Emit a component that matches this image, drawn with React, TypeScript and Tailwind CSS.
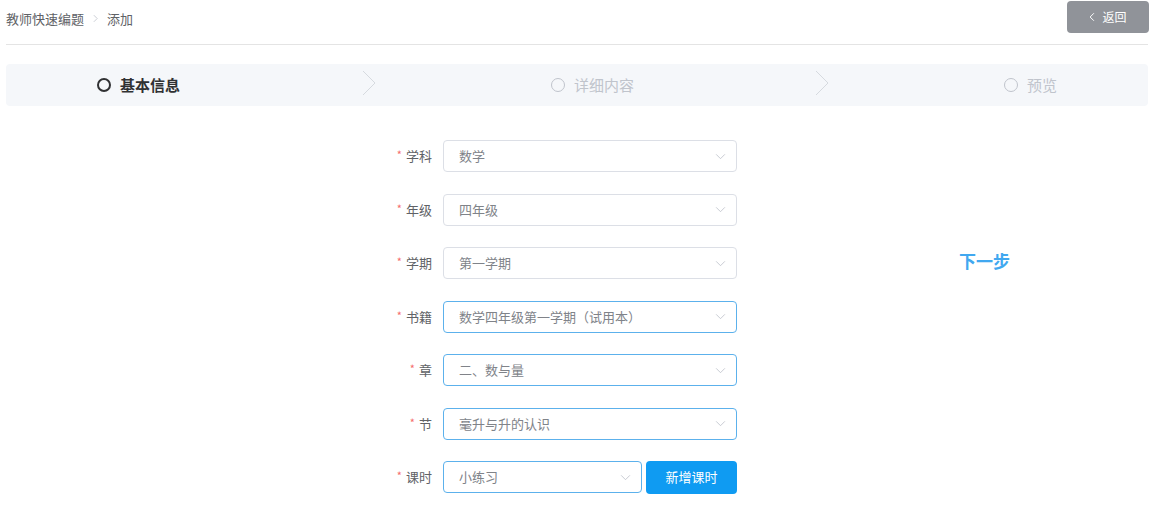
import React from 'react';

const font = { fontFamily: '"Noto Sans CJK SC", "Liberation Sans", sans-serif' };

function Chevron({ className }: { className?: string }) {
  return (
    <svg viewBox="0 0 12 8" className={className} fill="none" stroke="currentColor" strokeWidth="1">
      <path d="M1 1.5 L6 6.5 L11 1.5" />
    </svg>
  );
}

function StepArrow() {
  return (
    <svg viewBox="0 0 14 26" className="w-[14px] h-[26px] text-[#d3d6db] -mt-[4px]" fill="none" stroke="currentColor" strokeWidth="0.9">
      <path d="M1 1 L13 13 L1 25" />
    </svg>
  );
}

function Step({ label, active }: { label: string; active?: boolean }) {
  return (
    <div className={`flex items-center gap-[9px] text-[15px] ${active ? 'text-[#303133] font-bold' : 'text-[#c0c4cc]'}`}>
      <span className={`w-[14px] h-[14px] rounded-full ${active ? 'border-2 border-[#303133]' : 'border-[1.5px] border-[#c0c4cc]'}`} />
      <span>{label}</span>
    </div>
  );
}

function Field({ label, value, active, width = 'w-[294px]', children }: any) {
  return (
    <div className="flex items-center h-8">
      <div className="w-[443px] pr-[11px] flex justify-end items-center text-[13px] text-[#606266]">
        <span className="text-[#f56c6c] text-[11px] mr-[4px] -mt-[3px]">*</span>
        <span>{label}</span>
      </div>
      <div className={`${width} h-8 rounded-[4px] border flex items-center justify-between pl-[15px] pr-[10px] ${active ? 'border-[#5cb1ec]' : 'border-[#dcdfe6]'}`}>
        <span className="text-[13px] text-[#808389]">{value}</span>
        <Chevron className="w-[11px] h-[7px] text-[#c0c4cc]" />
      </div>
      {children}
    </div>
  );
}

export default function App() {
  return (
    <div className="w-[1154px] h-[513px] bg-white overflow-hidden" style={font}>
      <div className="px-[6px]">
        <div className="flex items-center justify-between h-[45px] border-b border-[#e4e4e4]">
          <div className="flex items-center text-[13px] text-[#606266] pb-[7px]">
            <span>教师快速编题</span>
            <svg viewBox="0 0 6 10" className="w-[5px] h-[9px] mx-[9px] text-[#c0c4cc]" fill="none" stroke="currentColor" strokeWidth="1">
              <path d="M1 1 L5 5 L1 9" />
            </svg>
            <span>添加</span>
          </div>
          <button className="w-[82px] h-[32px] mb-[10px] mr-[-1px] rounded-[4px] bg-[#909399] text-white text-[12px] flex items-center justify-center gap-[7px]">
            <svg viewBox="0 0 8 12" className="w-[6px] h-[10px]" fill="none" stroke="currentColor" strokeWidth="1.3">
              <path d="M6.5 1 L1.5 6 L6.5 11" />
            </svg>
            <span>返回</span>
          </button>
        </div>

        <div className="mt-[19px] h-[42px] rounded-[4px] bg-[#f5f7fa] flex items-center">
          <div className="ml-[91px] w-[265px]"><Step label="基本信息" active /></div>
          <StepArrow />
          <div className="ml-[175px] w-[264px]"><Step label="详细内容" /></div>
          <StepArrow />
          <div className="ml-[175px]"><Step label="预览" /></div>
        </div>
      </div>

      <div className="flex mt-[34px]">
        <div className="flex flex-col gap-[21.5px]">
          <Field label="学科" value="数学" />
          <Field label="年级" value="四年级" />
          <Field label="学期" value="第一学期" />
          <Field label="书籍" value="数学四年级第一学期（试用本）" active />
          <Field label="章" value="二、数与量" active />
          <Field label="节" value="毫升与升的认识" active />
          <Field label="课时" value="小练习" active width="w-[199px]">
            <button className="ml-[4px] w-[91px] h-[33px] rounded-[4px] bg-[#0f9bf2] text-white text-[13px]">新增课时</button>
          </Field>
        </div>
        <div className="ml-[222px] mt-[108px] h-[26px] text-[17px] font-bold text-[#41a8f0]">下一步</div>
      </div>
    </div>
  );
}
